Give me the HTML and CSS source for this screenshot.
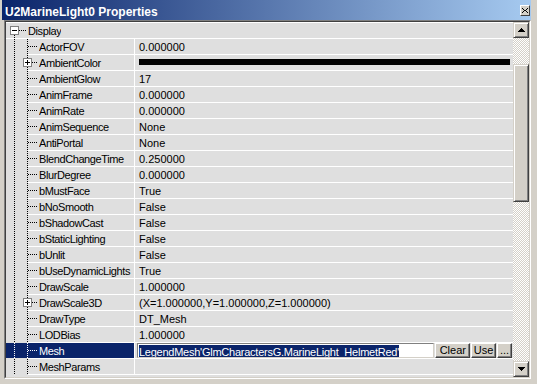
FILE: index.html
```html
<!DOCTYPE html>
<html lang="en">
<head>
    <meta charset="UTF-8">
    <title>U2MarineLight0 Properties</title>
    <link rel="stylesheet" href="styles.css">
</head>
<body>
    <div class="window">
        <div class="titlebar">
            <span class="title">U2MarineLight0 Properties</span>
            <button class="close">
                <svg width="6" height="5" viewBox="0 0 6 5"><path d="M0 0h1v1h1v1h2v-1h1v-1h1v1h-1v1h-1v1h1v1h1v1h-1v-1h-1v-1h-2v1h-1v1h-1v-1h1v-1h1v-1h-1v-1h-1z" fill="#000"/></svg>
            </button>
        </div>
        <div class="frame">
            <div class="inner">
                <div class="grid">
                    <div class="row cat">
                        <div class="tree root"><span class="box minus"></span></div>
                        <div class="name">Display</div>
                    </div>
                    <div class="row"><div class="tree"></div><div class="name">ActorFOV</div><div class="val">0.000000</div></div>
                    <div class="row"><div class="tree has-box"><span class="box plus"></span></div><div class="name">AmbientColor</div><div class="val"><div class="swatch"></div></div></div>
                    <div class="row"><div class="tree"></div><div class="name">AmbientGlow</div><div class="val">17</div></div>
                    <div class="row"><div class="tree"></div><div class="name">AnimFrame</div><div class="val">0.000000</div></div>
                    <div class="row"><div class="tree"></div><div class="name">AnimRate</div><div class="val">0.000000</div></div>
                    <div class="row"><div class="tree"></div><div class="name">AnimSequence</div><div class="val">None</div></div>
                    <div class="row"><div class="tree"></div><div class="name">AntiPortal</div><div class="val">None</div></div>
                    <div class="row"><div class="tree"></div><div class="name">BlendChangeTime</div><div class="val">0.250000</div></div>
                    <div class="row"><div class="tree"></div><div class="name">BlurDegree</div><div class="val">0.000000</div></div>
                    <div class="row"><div class="tree"></div><div class="name">bMustFace</div><div class="val">True</div></div>
                    <div class="row"><div class="tree"></div><div class="name">bNoSmooth</div><div class="val">False</div></div>
                    <div class="row"><div class="tree"></div><div class="name">bShadowCast</div><div class="val">False</div></div>
                    <div class="row"><div class="tree"></div><div class="name">bStaticLighting</div><div class="val">False</div></div>
                    <div class="row"><div class="tree"></div><div class="name">bUnlit</div><div class="val">False</div></div>
                    <div class="row"><div class="tree"></div><div class="name">bUseDynamicLights</div><div class="val">True</div></div>
                    <div class="row"><div class="tree"></div><div class="name">DrawScale</div><div class="val">1.000000</div></div>
                    <div class="row"><div class="tree has-box"><span class="box plus"></span></div><div class="name">DrawScale3D</div><div class="val">(X=1.000000,Y=1.000000,Z=1.000000)</div></div>
                    <div class="row"><div class="tree"></div><div class="name">DrawType</div><div class="val">DT_Mesh</div></div>
                    <div class="row"><div class="tree"></div><div class="name">LODBias</div><div class="val">1.000000</div></div>
                    <div class="row sel">
                        <div class="tree"></div>
                        <div class="name">Mesh</div>
                        <div class="val edit-row">
                            <div class="edit"><span class="selected">LegendMesh'GlmCharactersG.MarineLight_HelmetRed'</span></div>
                            <button class="btn clear">Clear</button>
                            <button class="btn use">Use</button>
                            <button class="btn more">...</button>
                        </div>
                    </div>
                    <div class="row"><div class="tree"></div><div class="name">MeshParams</div><div class="val"></div></div>
                </div>
                <div class="scrollbar">
                    <div class="sb-btn">
                        <svg width="7" height="4" viewBox="0 0 7 4"><path d="M3 0h1v1h1v1h1v1h1v1h-7v-1h1v-1h1v-1h1z" fill="#000"/></svg>
                    </div>
                    <div class="track"><div class="thumb"></div></div>
                    <div class="sb-btn">
                        <svg width="7" height="4" viewBox="0 0 7 4"><path d="M0 0h7v1h-1v1h-1v1h-1v1h-1v-1h-1v-1h-1v-1h-1z" fill="#000"/></svg>
                    </div>
                </div>
            </div>
        </div>
    </div>
</body>
</html>
```

FILE: styles.css
```css
* { box-sizing: border-box; }
body { margin: 0; font-family: "Liberation Sans", Arial, sans-serif; font-size: 11px; color: #000; background: #d4d0c8; }

.window { width: 537px; height: 384px; background: #d4d0c8; padding: 0 6px 0 2px; overflow: hidden; }

.titlebar { height: 20px; display: flex; justify-content: space-between; align-items: flex-start; padding: 0 1px 0 3px; background: linear-gradient(to right, #0a246a, #a6caf0); }
.title { color: #fff; font-weight: bold; font-size: 12px; line-height: 17px; padding-top: 4px; white-space: nowrap; }
.close { width: 10px; height: 11px; margin-top: 5px; padding: 0; background: #d4d0c8; border: 1px solid; border-color: #fff #404040 #404040 #fff; display: flex; align-items: center; justify-content: center; }
.close svg { display: block; }

.frame { margin-left: 2px; height: 359px; border: 1px solid; border-color: #808080 #fff #fff #808080; }
.inner { height: 100%; display: flex; border: 1px solid; border-color: #404040 #d4d0c8 #d4d0c8 #404040; }

.grid { flex: 1; overflow: hidden; border-top: 1px solid #fff; background: #dfdfdf; }

/* one property per row: 15px cell + 1px white rule */
.row { --dot: #000; --hl: transparent; --stub-x: 22px; --stub-w: 10px; display: flex; height: 16px; background: linear-gradient(#fff, #fff) 22px 15px / 100% 1px no-repeat, #dfdfdf; }
.row.cat { background: linear-gradient(#fff, #fff) 0 15px / 100% 1px no-repeat, #dfdfdf; }
.row.sel { --dot: #fff; --hl: #0a246a; }

.tree { width: 33px; height: 16px; flex: none; display: flex; align-items: flex-start;
    background:
        repeating-linear-gradient(to bottom, var(--dot) 0 1px, transparent 1px 2px) 8px 0 / 1px 16px no-repeat,
        repeating-linear-gradient(to bottom, var(--dot) 0 1px, transparent 1px 2px) 21px 0 / 1px 16px no-repeat,
        repeating-linear-gradient(to right, var(--dot) 0 1px, transparent 1px 2px) var(--stub-x) 7px / var(--stub-w) 1px no-repeat,
        linear-gradient(var(--hl), var(--hl)) 0 0 / 100% 15px no-repeat; }
.tree.has-box { --stub-x: 26px; --stub-w: 6px; }
.tree.root { width: 22px;
    background:
        repeating-linear-gradient(to bottom, #000 0 1px, transparent 1px 2px) 8px 12px / 1px 4px no-repeat,
        repeating-linear-gradient(to right, #000 0 1px, transparent 1px 2px) 13px 7px / 8px 1px no-repeat; }

.box { position: relative; width: 9px; height: 9px; margin: 3px 0 0 17px; border: 1px solid #808080; background: #fff; }
.root .box { margin-left: 4px; }
.box::before { content: ""; position: absolute; left: 1px; top: 3px; width: 5px; height: 1px; background: #000; }
.box.plus::after { content: ""; position: absolute; left: 3px; top: 1px; width: 1px; height: 5px; background: #000; }

.name { width: 95px; height: 15px; flex: none; line-height: 17px; letter-spacing: -0.4px; white-space: nowrap; overflow: hidden; background: var(--hl); }
.row.cat .name { width: auto; }
.row.sel .name { color: #fff; }

.val { flex: 1; height: 15px; padding: 0 3px 0 4px; line-height: 17px; white-space: nowrap; overflow: hidden; border-left: 1px solid #fff; }
.swatch { height: 6px; margin-top: 4px; background: #000; }

.edit-row { display: flex; padding: 0 1px 0 1px; }
.edit { width: 299px; height: 15px; margin-left: 1px; padding-left: 1px; border: 1px solid; border-color: #808080 #d4d0c8 #d4d0c8 #808080; background: #fff; line-height: 15px; overflow: hidden; }
.selected { display: inline-block; height: 12px; line-height: 14px; margin-top: 1px; letter-spacing: -0.25px; background: #0a246a; color: #fff; vertical-align: top; }

.btn { height: 15px; margin-left: 1px; padding: 0; font-family: "Liberation Sans", Arial, sans-serif; font-size: 11px; line-height: 13px; color: #000; background: #d4d0c8; border: 1px solid; border-color: #fff #404040 #404040 #fff; box-shadow: inset -1px -1px #808080; }
.btn.clear { width: 35px; }
.btn.use { width: 25px; }
.btn.more { width: 15px; }

.scrollbar { width: 16px; flex: none; display: flex; flex-direction: column; }
.sb-btn, .thumb { background: #d4d0c8; border: 1px solid; border-color: #d4d0c8 #404040 #404040 #d4d0c8; box-shadow: inset 1px 1px #fff, inset -1px -1px #808080; }
.sb-btn { height: 16px; flex: none; display: flex; align-items: center; justify-content: center; }
.sb-btn svg { display: block; }
.track { flex: 1; padding-top: 26px; background: repeating-conic-gradient(#fff 0 25%, #d4d0c8 0 50%) 0 0 / 2px 2px; }
.thumb { height: 138px; }
```
